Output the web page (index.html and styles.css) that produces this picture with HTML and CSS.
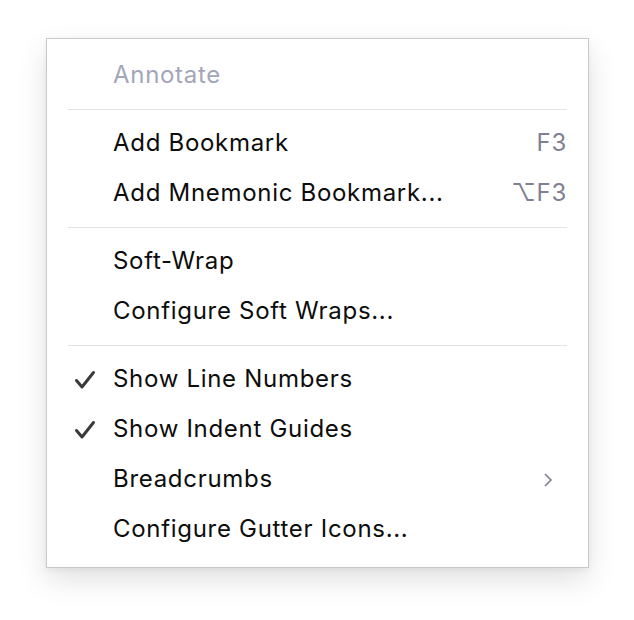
FILE: index.html
```html
<!DOCTYPE html>
<html>
<head>
<meta charset="utf-8">
<link rel="stylesheet" href="styles.css">
</head>
<body>
<div class="menu">
  <div class="item disabled"><span class="check"></span><span class="label">Annotate</span></div>
  <div class="sep"></div>
  <div class="item"><span class="check"></span><span class="label">Add Bookmark</span><span class="key">F3</span></div>
  <div class="item"><span class="check"></span><span class="label">Add Mnemonic Bookmark...</span><span class="key">⌥F3</span></div>
  <div class="sep"></div>
  <div class="item"><span class="check"></span><span class="label">Soft-Wrap</span></div>
  <div class="item"><span class="check"></span><span class="label">Configure Soft Wraps...</span></div>
  <div class="sep"></div>
  <div class="item"><span class="check"><svg width="22" height="20" viewBox="0 0 22 20"><path d="M2.5 10.5 L8 17 L19.5 2.5" fill="none" stroke="#3a3a3a" stroke-width="3" stroke-linecap="round" stroke-linejoin="round"/></svg></span><span class="label">Show Line Numbers</span></div>
  <div class="item"><span class="check"><svg width="22" height="20" viewBox="0 0 22 20"><path d="M2.5 10.5 L8 17 L19.5 2.5" fill="none" stroke="#3a3a3a" stroke-width="3" stroke-linecap="round" stroke-linejoin="round"/></svg></span><span class="label">Show Indent Guides</span></div>
  <div class="item"><span class="check"></span><span class="label">Breadcrumbs</span><span class="key arrow"><svg width="10" height="16" viewBox="0 0 10 16"><path d="M2 2 L8 8 L2 14" fill="none" stroke="#7c7e90" stroke-width="1.6"/></svg></span></div>
  <div class="item"><span class="check"></span><span class="label">Configure Gutter Icons...</span></div>
</div>
</body>
</html>
```
FILE: styles.css
```css
html, body {
  margin: 0;
  padding: 0;
  background: #ffffff;
}
body {
  width: 634px;
  height: 620px;
  overflow: hidden;
  font-family: Inter, "Noto Sans", sans-serif;
}
.menu {
  margin: 38px 0 0 46px;
  width: 541px;
  padding: 12px 0;
  background: #ffffff;
  border: 1px solid #c9c9c9;
  box-shadow: 0 12px 28px rgba(0, 0, 0, 0.12), 0 2px 6px rgba(0, 0, 0, 0.05);
  box-sizing: content-box;
}
.item {
  height: 50px;
  box-sizing: border-box;
  display: flex;
  align-items: center;
  padding: 0 21px 3px 27px;
  font-size: 24px;
  letter-spacing: 0.7px;
  color: #0d0d0d;
}
.check {
  width: 39px;
  display: flex;
  align-items: center;
  padding-top: 3px;
}
.label {
  flex: 1;
}
.disabled {
  color: #a3a6b8;
}
.key {
  color: #7f8092;
}
.arrow {
  display: flex;
  align-items: center;
  padding-right: 14px;
  padding-top: 3px;
}
.sep {
  height: 1px;
  background: #e2e2e8;
  margin: 8px 21px 9px 21px;
}
```
